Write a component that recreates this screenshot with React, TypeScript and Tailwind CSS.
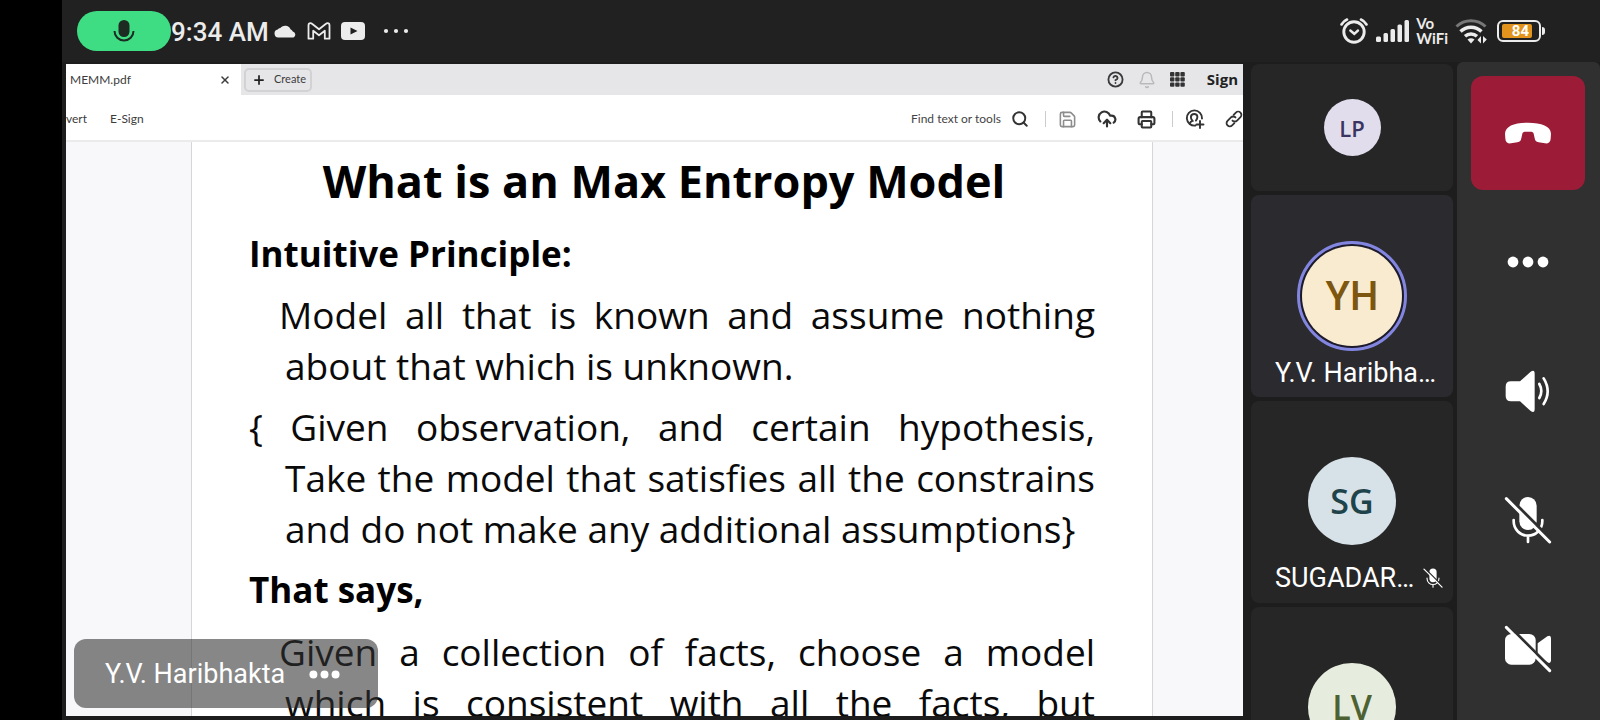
import type { ReactNode } from "react";
import {
  Bell,
  CircleHelp,
  CloudUpload,
  Plus,
  Printer,
  Save,
  Search,
  X,
} from "lucide-react";

const ROBOTO = "font-['Roboto','Liberation_Sans',sans-serif]";
const OPEN = "font-['Open_Sans','Noto_Sans',sans-serif]";
const LATO = "font-['Lato','Open_Sans',sans-serif]";

function MicOffIcon({ className, gap }: { className: string; gap: string }) {
  return (
    <svg viewBox="0 0 144 144" className={className} fill="none" aria-hidden="true">
      <rect x="46" y="3" width="52" height="99" rx="26" fill="currentColor" />
      <path
        d="M29 72v4a43 43 0 0 0 86 0v-4M72 121v17"
        stroke="currentColor"
        strokeWidth="8"
        strokeLinecap="round"
      />
      <path d="M14 3 144 133" stroke={gap} strokeWidth="9" />
      <path d="M7 8 137 138" stroke="currentColor" strokeWidth="9" strokeLinecap="round" />
    </svg>
  );
}

function VideoOffIcon() {
  return (
    <svg viewBox="0 0 144 144" className="size-12" fill="none" aria-hidden="true">
      <rect x="3" y="27" width="92" height="92" rx="19" fill="currentColor" />
      <path d="M101 55 130 34q11-6 11 6v66q0 12-11 6L101 91z" fill="currentColor" />
      <path d="M14 2 144 132" stroke="#303030" strokeWidth="9" />
      <path d="M7 7 137 137" stroke="currentColor" strokeWidth="9" strokeLinecap="round" />
    </svg>
  );
}

function SpeakerIcon() {
  return (
    <svg viewBox="0 0 144 144" className="size-12" fill="none" aria-hidden="true">
      <path
        d="M5 59q0-16 16-16h27L80 14q12-8 12 6v106q0 14-12 6l-32-29H21q-16 0-16-16z"
        fill="currentColor"
      />
      <path
        d="M106 51q12 21 0 42M119 34q24 39 0 77"
        stroke="currentColor"
        strokeWidth="8"
        strokeLinecap="round"
      />
    </svg>
  );
}

function HangUpIcon() {
  return (
    <svg viewBox="0 0 144 68" className="h-6 w-12" fill="currentColor" aria-hidden="true">
      <path d="M3 36C4 13 31 3 72 3s68 10 69 33l-1 15c-1 11-7 15-17 14l-19-3c-8-1-11-5-12-12l-3-14c-1-5-4-6-11-6H66c-7 0-10 1-11 6l-3 14c-1 7-4 11-12 12l-19 3C11 66 5 62 4 51z" />
    </svg>
  );
}

function MoreIcon({ className }: { className: string }) {
  return (
    <svg viewBox="0 0 42 12" className={className} fill="currentColor" aria-hidden="true">
      <circle cx="6" cy="6" r="5.4" />
      <circle cx="21" cy="6" r="5.4" />
      <circle cx="36" cy="6" r="5.4" />
    </svg>
  );
}

function StatusBar() {
  return (
    <header className={`flex h-[62px] shrink-0 items-center justify-between bg-[#212121] pr-[55px] pl-[15px] text-[#ececec] ${ROBOTO}`}>
      <div className="flex items-center">
        <span className="flex h-10 w-[94px] items-center justify-center rounded-full bg-[#3fdd83] text-[#1d2b22]">
          <svg viewBox="0 0 22 24" className="h-6 w-[22px]" fill="none" aria-label="Microphone in use">
            <rect x="5.5" y="1" width="11" height="17" rx="5.5" fill="currentColor" />
            <path d="M1.5 12a9.5 9.5 0 0 0 19 0" stroke="currentColor" strokeWidth="2" />
          </svg>
        </span>
        <time className="pt-[2px] text-[26px] leading-8 font-medium">9:34 AM</time>
        <svg viewBox="0 0 23 14" className="ml-[5px] h-[14px] w-[23px]" fill="currentColor" aria-hidden="true">
          <path d="M4.200 13.500a4 4 0 0 1-.5-7.900A3 3 0 0 1 6.300 4a6 6 0 0 1 10.200 1.200 4.200 4.200 0 0 1 2.300 2.300 3.200 3.200 0 0 1 .7 6z" />
        </svg>
        <svg viewBox="0 0 24 18" className="ml-[10px] h-[18px] w-6" fill="none" stroke="currentColor" strokeWidth="1.800" strokeLinejoin="round" aria-hidden="true">
          <path d="M1.500 3.500Q1.500 1.200 3.500 1.200 4.300 1.200 5 1.800L12 7.300 19 1.800Q19.700 1.200 20.500 1.200 22.500 1.200 22.500 3.500V16.700H17.800V8.700L12 13.200 6.200 8.700V16.700H1.500z" />
        </svg>
        <svg viewBox="0 0 24 18" className="ml-[10px] h-[18px] w-6" aria-hidden="true">
          <rect width="24" height="18" rx="4" fill="currentColor" />
          <path d="m9.500 5.500 7 3.500-7 3.500z" fill="#212121" />
        </svg>
        <svg viewBox="0 0 26 6" className="ml-[18px] h-[6px] w-[26px]" fill="currentColor" aria-hidden="true">
          <circle cx="3" cy="3" r="2.100" />
          <circle cx="13" cy="3" r="2.100" />
          <circle cx="23" cy="3" r="2.100" />
        </svg>
      </div>
      <div className="flex items-center">
        <svg viewBox="0 0 28 26" className="h-[26px] w-7" fill="none" stroke="currentColor" strokeLinecap="round" aria-hidden="true">
          <circle cx="14" cy="14" r="10.200" strokeWidth="2.900" />
          <path d="m10.300 12.500 4 3.300 3.700-3.300" strokeWidth="2.400" />
          <path d="M1.500 6.500Q3.500 3 7 1.500M26.500 6.500Q24.500 3 21 1.500" strokeWidth="2.600" />
        </svg>
        <svg viewBox="0 0 34 22" className="ml-2 h-[22px] w-[34px]" fill="currentColor" aria-hidden="true">
          <rect x="0" y="16.500" width="5" height="5.500" rx="1.500" />
          <rect x="7.500" y="13" width="4.500" height="9" rx="1.500" />
          <rect x="14.500" y="9" width="4.500" height="13" rx="1.500" />
          <rect x="21.500" y="4.500" width="4.500" height="17.500" rx="1.500" />
          <rect x="28.500" y="0" width="4.500" height="22" rx="1.500" />
        </svg>
        <span className={`ml-[6px] flex flex-col text-[15px] leading-[15px] font-bold ${LATO}`}>
          <span>Vo</span>
          <span>WiFi</span>
        </span>
        <svg viewBox="0 0 34 26" className="ml-[7px] h-[26px] w-[34px]" fill="none" stroke="currentColor" aria-hidden="true">
          <path d="M1.500 8.500a21 21 0 0 1 29 0" strokeWidth="3" stroke="#777" />
          <path d="M5.500 13.500a15 15 0 0 1 21 0" strokeWidth="3.400" />
          <path d="M10 18.300a9 9 0 0 1 12 0" strokeWidth="3.400" />
          <path d="M12.500 21.500q3.500-2.500 7 0L16 25.500z" fill="currentColor" stroke="none" />
          <path d="M26 18v7.500L22.500 22zM28 25.500V18l3.800 3.500z" fill="currentColor" stroke="none" />
        </svg>
        <span className="ml-[8px] flex h-[22px] w-11 items-center rounded-[6px] border-2 border-current p-[3px]">
          <span className="flex h-[14px] w-[30px] items-center justify-end rounded-[2px] bg-[#e3941d] pr-[3px] text-[15px] leading-[14px] font-bold text-white">
            84
          </span>
        </span>
        <span className="ml-px h-2 w-[3px] rounded-r-full bg-current" />
      </div>
    </header>
  );
}

function ToolButton({ label, children }: { label: string; children: ReactNode }) {
  return (
    <button type="button" aria-label={label} className="flex shrink-0 items-center justify-center">
      {children}
    </button>
  );
}

function PdfChrome() {
  return (
    <div className={`shrink-0 text-[#3c3c3c] ${LATO}`}>
      <div className="flex h-[31px] items-center bg-[#e6e6e9]">
        <div className="flex h-full w-[175px] items-center justify-between bg-white pr-[10px] pl-1 text-[12px]">
          <span>MEMM.pdf</span>
          <button type="button" aria-label="Close tab">
            <X className="size-3" strokeWidth={3} />
          </button>
        </div>
        <button
          type="button"
          className="ml-[3px] flex h-6 w-[68px] items-center gap-2 rounded-[5px] border-2 border-[#d2d2d5] pl-[6px] text-[11px]"
        >
          <Plus className="size-[14px] text-[#222]" strokeWidth={3} />
          Create
        </button>
        <div className="ml-auto flex items-center gap-[14px] pr-[5px]">
          <ToolButton label="Help">
            <CircleHelp className="size-[17px] text-[#3a3a3a]" strokeWidth={2.6} />
          </ToolButton>
          <ToolButton label="Notifications">
            <Bell className="size-[18px] text-[#b9b9bc]" />
          </ToolButton>
          <ToolButton label="Apps">
            <svg viewBox="0 0 15 15" className="size-[15px] text-[#333]" fill="currentColor" aria-hidden="true">
              {[0, 5.2, 10.4].map((y) =>
                [0, 5.2, 10.4].map((x) => (
                  <rect key={`${x}-${y}`} x={x} y={y} width="4.400" height="4.400" rx="1" />
                )),
              )}
            </svg>
          </ToolButton>
          <a href="#sign-in" className={`ml-2 text-[15px] font-bold text-[#222] ${OPEN}`}>
            Sign
          </a>
        </div>
      </div>
      <div className="flex h-[47px] items-center border-b-2 border-[#ebebec] bg-white pt-[3px] text-[12px]">
        <div className="flex w-[21px] justify-end overflow-hidden">
          <a href="#convert">Convert</a>
        </div>
        <a href="#e-sign" className="ml-[23px]">
          E-Sign
        </a>
        <div className="ml-auto flex items-center">
          <label htmlFor="find" className="flex items-center gap-2">
            <input
              id="find"
              aria-label="Find text or tools"
              placeholder="Find text or tools"
              className="w-[92px] bg-transparent outline-none placeholder:text-[#444]"
            />
            <Search className="size-[18px] text-[#333]" strokeWidth={2.6} />
          </label>
          <span className="mr-3 ml-4 h-4 w-px bg-[#ccc]" />
          <div className="flex items-center gap-5">
            <ToolButton label="Save">
              <Save className="size-[19px] text-[#8d8d8d]" strokeWidth={2} />
            </ToolButton>
            <ToolButton label="Upload to cloud">
              <CloudUpload className="size-5 text-[#333]" strokeWidth={2.6} />
            </ToolButton>
            <ToolButton label="Print">
              <Printer className="size-[19px] text-[#333]" strokeWidth={2.6} />
            </ToolButton>
          </div>
          <span className="mr-3 ml-4 h-4 w-px bg-[#ccc]" />
          <ToolButton label="Request signatures">
            <svg viewBox="0 0 20 20" className="size-5 text-[#333]" fill="none" stroke="currentColor" strokeWidth="1.900" strokeLinecap="round" aria-hidden="true">
              <path d="M10.500 16.500A7.600 7.600 0 1 1 17 9.500M15 12v7M11.500 15.500h7" />
              <path d="M4.800 14.500q.5-2 2.700-2.700-1.800-2-1.600-4 .3-2.800 3.300-2.800 3 0 3.200 2.800.100 2-1.500 3.800" />
            </svg>
          </ToolButton>
          <div className="ml-5 w-[18px] overflow-hidden">
            <ToolButton label="Copy link">
              <svg viewBox="0 0 20 20" className="size-[18px] text-[#333]" fill="none" stroke="currentColor" strokeWidth="2" strokeLinecap="round" aria-hidden="true">
                <path d="M8.300 11.700a3.600 3.600 0 0 0 5.100 0l3.800-3.800a3.600 3.600 0 0 0-5.100-5.100L9.600 5.300" />
                <path d="M11.700 8.300a3.600 3.600 0 0 0-5.100 0l-3.800 3.800a3.600 3.600 0 0 0 5.100 5.100l2.500-2.500" />
              </svg>
            </ToolButton>
          </div>
        </div>
      </div>
    </div>
  );
}

function Slide() {
  return (
    <div className="min-h-0 flex-1 overflow-hidden bg-[#f8f7fa] pr-[90px] pl-[125px]">
      <article className={`h-full border-x border-[#d6d6d9] bg-white px-[57px] text-[37px] leading-[51px] text-[#0a0a0a] [font-variant-ligatures:none] ${OPEN}`}>
        <h1 className="pt-[9px] pr-4 text-center text-[45px] leading-[60px] font-bold whitespace-nowrap text-black">
          What is an Max Entropy Model
        </h1>
        <h2 className="mt-[17px] text-[35px] font-bold text-black">Intuitive Principle:</h2>
        <p className="mt-[10px] pl-9 -indent-[6px] text-justify">
          Model all that is known and assume nothing about that which is unknown.
        </p>
        <p className="mt-[10px] pl-9 -indent-9 text-justify">
          {"{ Given observation, and certain hypothesis, Take the model that satisfies all the constrains and do not make any additional assumptions}"}
        </p>
        <h2 className="mt-[10px] text-[35px] font-bold text-black">That says,</h2>
        <p className="mt-[11px] pl-9 -indent-[6px] text-justify [text-align-last:justify]">
          Given a collection of facts, choose a model which is consistent with all the facts, but
        </p>
      </article>
    </div>
  );
}

function Tile({ className, children }: { className: string; children: ReactNode }) {
  return (
    <li className={`flex shrink-0 flex-col items-center rounded-lg ${className}`}>{children}</li>
  );
}

function Participants() {
  return (
    <ul className={`flex w-[202px] shrink-0 flex-col gap-1 overflow-hidden pt-[2px] text-[27px] leading-8 text-white ${ROBOTO}`}>
      <Tile className="h-[127px] justify-center bg-[#262626]">
        <span className={`flex size-[57px] items-center justify-center rounded-full bg-[#e2dded] text-[22px] font-semibold text-[#3a3463] ${OPEN}`}>
          LP
        </span>
      </Tile>
      <Tile className="h-[202px] bg-[#2b2a2f] pt-[46px]">
        <span className="rounded-full border-[3px] border-[#8386e0] bg-[#1d1b2b] p-[2px]">
          <span className="flex size-[100px] items-center justify-center rounded-full bg-[#f8ebcf] pt-[2px] text-[40px] font-medium text-[#7d5610]">
            YH
          </span>
        </span>
        <span className="mt-[6px] block w-[174px] truncate pl-[10px]">Y.V. Haribhakta</span>
      </Tile>
      <Tile className="h-[202px] bg-[#262626] pt-14">
        <span className={`flex size-[88px] items-center justify-center rounded-full bg-[#d7e2e8] text-[34px] font-semibold text-[#1f434b] ${OPEN}`}>
          SG
        </span>
        <span className="mt-[17px] flex items-center gap-1 self-end pr-[10px]">
          <span className="w-[144px] truncate">SUGADARE G</span>
          <MicOffIcon className="size-5 shrink-0" gap="#262626" />
        </span>
      </Tile>
      <Tile className="h-[202px] bg-[#262626] pt-14">
        <span className={`flex size-[88px] items-center justify-center rounded-full bg-[#e7edde] text-[34px] font-semibold text-[#4d6232] ${OPEN}`}>
          LV
        </span>
      </Tile>
    </ul>
  );
}

function CallButton({ label, className = "", children }: { label: string; className?: string; children: ReactNode }) {
  return (
    <button
      type="button"
      aria-label={label}
      className={`flex size-[114px] shrink-0 items-center justify-center rounded-xl text-white ${className}`}
    >
      {children}
    </button>
  );
}

function CallControls() {
  return (
    <nav aria-label="Call controls" className="flex w-[143px] shrink-0 flex-col items-center gap-[15px] overflow-hidden rounded-t-md bg-[#303030] pt-[14px] pr-[2px]">
      <CallButton label="Leave call" className="bg-[#9c1c38]">
        <HangUpIcon />
      </CallButton>
      <CallButton label="More options">
        <MoreIcon className="h-3 w-[42px]" />
      </CallButton>
      <CallButton label="Speaker">
        <SpeakerIcon />
      </CallButton>
      <CallButton label="Unmute">
        <MicOffIcon className="size-12" gap="#303030" />
      </CallButton>
      <CallButton label="Turn camera on">
        <VideoOffIcon />
      </CallButton>
    </nav>
  );
}

export default function App() {
  return (
    <div className="flex h-screen flex-col overflow-hidden border-l-[62px] border-black bg-[#1d1d1e]">
      <StatusBar />
      <div className="flex min-h-0 flex-1">
        <main className="relative mt-[2px] mb-1 ml-1 flex min-w-0 flex-1 flex-col bg-white">
          <PdfChrome />
          <Slide />
          <div className={`absolute bottom-2 left-2 flex h-[69px] items-center gap-6 rounded-xl bg-[#303030]/58 pt-[2px] pr-[38px] pl-[31px] text-[27px] text-white ${ROBOTO}`}>
            <span>Y.V. Haribhakta</span>
            <button type="button" aria-label="Presenter options">
              <MoreIcon className="h-[9px] w-[31px]" />
            </button>
          </div>
        </main>
        <div className="flex gap-1 pl-2">
          <Participants />
          <CallControls />
        </div>
      </div>
    </div>
  );
}
